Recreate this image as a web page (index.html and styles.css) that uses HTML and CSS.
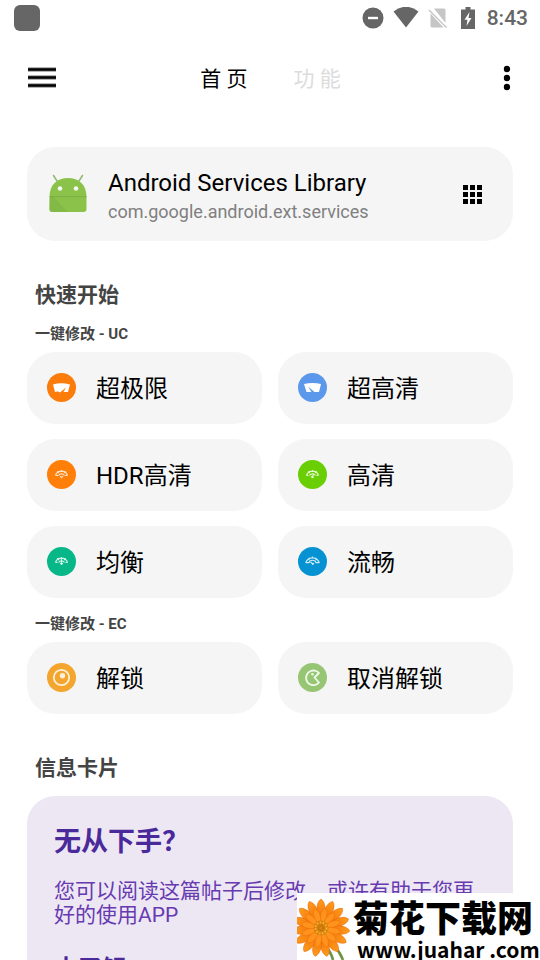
FILE: index.html
```html
<!DOCTYPE html>
<html lang="zh-CN">
<head>
<meta charset="utf-8">
<meta name="viewport" content="width=device-width, initial-scale=1">
<title>首页</title>
<link rel="stylesheet" href="styles.css">
</head>
<body>
<div class="status">
  <span class="status-app"></span>
  <div class="status-icons">
    <svg width="22" height="22" viewBox="0 0 22 22"><circle cx="11" cy="11" r="10.5" fill="#666"/><path d="M6 11h10" stroke="#fff" stroke-width="2.4"/></svg>
    <svg width="26" height="22" viewBox="0 0 26 22"><path d="M.5 4.500Q13-5 25.500 4.500L13 20.500z" fill="#666"/></svg>
    <svg class="sim" width="20" height="22" viewBox="0 0 20 22"><path d="M6 1.500h10q1.500 0 1.500 1.500v13zM2.500 6.500l13 14H4q-1.500 0-1.500-1.500z" fill="#c6c6c6"/><path d="M1 3l17.500 17.500" stroke="#c6c6c6" stroke-width="1.600"/><path d="M4 3.500L18 18" stroke="#fff" stroke-width="1.200"/></svg>
    <svg class="battery" width="14" height="22" viewBox="0 0 14 22"><path d="M4.500 0h5v2.500H14V22H0V2.500h4.500z" fill="#666"/><path d="M8.500 5L3.500 12.800h3L5.500 19l5-8h-3z" fill="#fff"/></svg>
    <span class="clock">8:43</span>
  </div>
</div>

<header class="appbar">
  <button class="icon-btn" aria-label="菜单"><svg width="28" height="22" viewBox="0 0 28 22"><path d="M0 2.500h28M0 10.500h28M0 18.500h28" stroke="#999" stroke-width="4.400"/><path d="M0 2.500h28M0 10.500h28M0 18.500h28" stroke="#000" stroke-width="2.600"/></svg></button>
  <nav class="tabs">
    <a class="tab tab-active" href="#home">首 页</a>
    <a class="tab" href="#features">功 能</a>
  </nav>
  <button class="icon-btn icon-end" aria-label="更多"><svg width="12" height="26" viewBox="0 0 12 26"><circle cx="6" cy="4" r="3.200"/><circle cx="6" cy="13" r="3.200"/><circle cx="6" cy="22" r="3.200"/></svg></button>
</header>

<main id="home">
  <section class="app-card">
    <svg width="38" height="40" viewBox="0 0 38 40">
      <path d="M8 7L4.500 1.500M30 7l3.500-5.500" stroke="#8fb871" stroke-width="1.500" stroke-linecap="round"/>
      <path d="M.5 22.500C.5 11 8 4 19 4s18.500 7 18.500 18.500z" fill="#8bc34a"/>
      <path d="M.5 22.500h37V35q0 3-3 3h-31q-3 0-3-3z" fill="#8bc34a"/>
      <path d="M1 22.500h3L19 38H3.500q-3 0-3-3z" fill="#83ba47"/>
      <path d="M.5 22.700h37" stroke="#78a93f" stroke-width="1"/>
      <circle cx="11" cy="14.500" r="2.300" fill="#f5f5f5"/><circle cx="27" cy="14.500" r="2.300" fill="#f5f5f5"/>
    </svg>
    <div class="app-text">
      <h1>Android Services Library</h1>
      <p>com.google.android.ext.services</p>
    </div>
    <button class="icon-btn" aria-label="选择应用"><svg width="19" height="19" viewBox="0 0 19 19"><path d="M0 0h5v5H0zM7 0h5v5H7zM14 0h5v5h-5zM0 7h5v5H0zM7 7h5v5H7zM14 7h5v5h-5zM0 14h5v5H0zM7 14h5v5H7zM14 14h5v5h-5z"/></svg></button>
  </section>

  <h2>快速开始</h2>
  <h3>一键修改 - UC</h3>
  <div class="grid">
    <button class="tile"><svg width="29" height="29" viewBox="0 0 29 29"><circle cx="14.500" cy="14.500" r="14.500" fill="#fb7c0a"/><path d="M6 11.500Q14.500 9 23 11.500L21 19h-4.500L19 14.500 13 19.500Q11 18 8 19z" fill="#fff"/></svg><span>超极限</span></button>
    <button class="tile"><svg width="29" height="29" viewBox="0 0 29 29"><circle cx="14.500" cy="14.500" r="14.500" fill="#5b98eb"/><path d="M6 11Q14.500 9 23 11L21 19h-4.500L10 13.500 13.500 19H8.500z" fill="#fff"/></svg><span>超高清</span></button>
    <button class="tile"><svg width="29" height="29" viewBox="0 0 29 29"><circle cx="14.500" cy="14.500" r="14.500" fill="#ff7f08"/><g fill="none" stroke="#ffe4cc" stroke-width="1.200"><path d="M8.500 15.500A6.200 5.800 0 0 1 20.500 15.500M11.500 15.500A3.500 3.500 0 0 1 17.500 15.500M8.500 15.500h2.500M18 15.500h2.500M14.500 10v2M10.200 11.500l1.800 1.500M18.800 11.500L17 13M13 16.200l1.500 1.500 1.500-1.500"/></g></svg><span>HDR高清</span></button>
    <button class="tile"><svg width="29" height="29" viewBox="0 0 29 29"><circle cx="14.500" cy="14.500" r="14.500" fill="#6ace04"/><g fill="none" stroke="#e4f8ce" stroke-width="1.200"><path d="M8.500 15.500A6.200 5.800 0 0 1 20.500 15.500M11.500 15.500A3.500 3.500 0 0 1 17.500 15.500M8.500 15.500h2M18.500 15.500h2M14.500 10v2M10.200 11.500l1.800 1.500M18.800 11.500L17 13M16 13.500l-2 4M13 16.500l1.500 1 1.500-.5"/></g></svg><span>高清</span></button>
    <button class="tile"><svg width="29" height="29" viewBox="0 0 29 29"><circle cx="14.500" cy="14.500" r="14.500" fill="#07b788"/><g fill="none" stroke="#cdf3e8" stroke-width="1.200"><path d="M8.500 15.500A6.200 5.800 0 0 1 20.500 15.500M11.500 15.500A3.500 3.500 0 0 1 17.500 15.500M8.500 15.500h2M18.500 15.500h2M14.500 10v7.500M10.200 11.500l1.800 1.500M18.800 11.500L17 13M13.200 16.200l1.300 1.300 1.300-1.300"/></g></svg><span>均衡</span></button>
    <button class="tile"><svg width="29" height="29" viewBox="0 0 29 29"><circle cx="14.500" cy="14.500" r="14.500" fill="#0592d2"/><g fill="none" stroke="#cdeaf7" stroke-width="1.200"><path d="M7.700 16A7 6.800 0 0 1 21.300 16M10.700 16A4 4 0 0 1 18.300 16M7.700 15.700h3M18.300 15.700h3M14.500 9.500v2M10.200 11.500l1.500 1.500M18.800 11.500L17.300 13M12.500 15l3 2.500M16 16l-2 1.500"/></g></svg><span>流畅</span></button>
  </div>

  <h3>一键修改 - EC</h3>
  <div class="grid">
    <button class="tile"><svg width="29" height="29" viewBox="0 0 29 29"><circle cx="14.500" cy="14.500" r="14.500" fill="#f4a52e"/><circle cx="14.500" cy="14.500" r="7.700" fill="none" stroke="#fff0d8" stroke-width="1.800"/><circle cx="15.500" cy="12.800" r="2.700" fill="#fff0d8"/></svg><span>解锁</span></button>
    <button class="tile"><svg width="29" height="29" viewBox="0 0 29 29"><circle cx="14.500" cy="14.500" r="14.500" fill="#96c674"/><path d="M21 10L16.500 14.500 21 19.500A7.300 7.300 0 1 1 18 8q2 .8 3 2z" fill="none" stroke="#f0fae8" stroke-width="1.800" stroke-linejoin="round"/><circle cx="14.500" cy="11.200" r="1.300" fill="#f0fae8"/></svg><span>取消解锁</span></button>
  </div>

  <h2>信息卡片</h2>
  <article class="info">
    <h4>无从下手？</h4>
    <p>您可以阅读这篇帖子后修改，或许有助于您更好的使用APP</p>
    <a href="#learn">去了解</a>
  </article>
</main>

<aside class="watermark">
  <svg width="56" height="67" viewBox="0 0 56 67">
    <defs>
      <linearGradient id="petal" x1="0" y1="0" x2="0" y2="1"><stop offset="0" stop-color="#ff9c1a"/><stop offset="1" stop-color="#f06a08"/></linearGradient>
      <path id="p" d="M0-5C-6-15-5-26 0-29C5-26 6-15 0-5z" fill="url(#petal)" stroke="#e5640a" stroke-width=".5"/>
      <path id="q" d="M0-3C-4-10-4-17 0-20C4-17 4-10 0-3z" fill="#ff931c" stroke="#ee750d" stroke-width=".5"/>
    </defs>
    <path d="M29 54q5 5 7 13M37 53q6 6 9 14" stroke="#6d9440" stroke-width="2.600" fill="none"/>
    <g transform="translate(24 35)">
      <use href="#p"/><use href="#p" transform="rotate(24)"/><use href="#p" transform="rotate(48)"/><use href="#p" transform="rotate(72)"/><use href="#p" transform="rotate(96)"/><use href="#p" transform="rotate(120)"/><use href="#p" transform="rotate(144)"/><use href="#p" transform="rotate(168)"/><use href="#p" transform="rotate(192)"/><use href="#p" transform="rotate(216)"/><use href="#p" transform="rotate(240)"/><use href="#p" transform="rotate(264)"/><use href="#p" transform="rotate(288)"/><use href="#p" transform="rotate(312)"/><use href="#p" transform="rotate(336)"/>
      <use href="#q" transform="rotate(12)"/><use href="#q" transform="rotate(42)"/><use href="#q" transform="rotate(72)"/><use href="#q" transform="rotate(102)"/><use href="#q" transform="rotate(132)"/><use href="#q" transform="rotate(162)"/><use href="#q" transform="rotate(192)"/><use href="#q" transform="rotate(222)"/><use href="#q" transform="rotate(252)"/><use href="#q" transform="rotate(282)"/><use href="#q" transform="rotate(312)"/><use href="#q" transform="rotate(342)"/>
      <circle r="7.500" fill="#d9820f"/><circle r="5.500" fill="none" stroke="#f5b52b" stroke-width="2" stroke-dasharray="1.500 1.500"/><circle r="2.500" fill="none" stroke="#b9680c" stroke-width="1.500" stroke-dasharray="1 1"/>
    </g>
  </svg>
  <div class="mark-text">
    <strong>菊花下载网</strong>
    <span>www.juahar .com</span>
  </div>
</aside>
</body>
</html>
```
FILE: styles.css
```css
* { box-sizing: border-box; }

body {
  position: relative;
  height: 100vh;
  margin: 0;
  overflow: hidden;
  background: #fff;
  color: #000;
  font-family: Roboto, "Noto Sans CJK SC", sans-serif;
}

svg { display: block; flex: none; }
h1, h2, h3, h4, p { margin: 0; }
button { border: 0; padding: 0; background: none; color: inherit; font: inherit; }
a { color: inherit; text-decoration: none; }

.status {
  display: flex;
  align-items: center;
  justify-content: space-between;
  height: 36px;
  padding: 0 12px 0 14px;
}
.status-app { width: 26px; height: 26px; border-radius: 6px; background: #666; }
.status-icons { display: flex; align-items: center; }
.status-icons svg { margin-right: 9px; }
.status-icons .sim { margin-right: 13px; }
.status-icons .battery { margin-right: 12px; }
.clock { color: #666; font-size: 21px; font-weight: 500; line-height: 24px; }

.appbar {
  display: grid;
  grid-template-columns: 1fr auto 1fr;
  align-items: center;
  height: 84px;
  padding: 0 27px 0 28px;
}
.icon-end { justify-self: end; }
.tabs { display: flex; gap: 46px; padding-top: 2px; }
.tab { color: #dcdcdc; font-size: 21px; line-height: 30px; }
.tab-active { color: #000; }

main { padding: 27px 27px 0; }

.app-card {
  display: flex;
  align-items: center;
  height: 94px;
  padding: 0 31px 0 22px;
  border-radius: 28px;
  background: #f5f5f5;
}
.app-text { flex: 1; padding: 4px 0 0 21px; }
.app-text h1 { font-size: 24px; font-weight: 400; line-height: 32px; }
.app-text p { color: #808080; font-size: 18px; line-height: 26px; }

h2 {
  padding: 42px 8px 0;
  color: #444;
  font-size: 21px;
  font-weight: 700;
  line-height: 25px;
}
h3 {
  padding: 15px 8px 7px;
  color: #444;
  font-size: 15px;
  font-weight: 700;
  line-height: 22px;
}

.grid { display: grid; grid-template-columns: 1fr 1fr; gap: 15px 16px; }
.tile {
  display: flex;
  align-items: center;
  gap: 20px;
  height: 72px;
  padding: 0 20px 2px;
  border-radius: 28px;
  background: #f5f5f5;
  font-size: 24px;
  text-align: left;
}
.tile span { padding-top: 4px; line-height: 32px; }

.info {
  margin-top: 15px;
  padding: 27px 27px 40px;
  border-radius: 28px;
  background: #ede7f4;
  color: #673ab0;
}
.info h4 { color: #4a2a9a; font-size: 27px; font-weight: 700; line-height: 38px; }
.info p { padding: 18px 0 24px; font-size: 21px; line-height: 24px; }
.info a { display: block; color: #4a2a9a; font-size: 24px; font-weight: 700; line-height: 36px; }

.watermark {
  position: absolute;
  right: 0;
  bottom: 0;
  display: flex;
  width: 45%;
  height: 67px;
  background: #fff;
}
.mark-text {
  display: flex;
  flex-direction: column;
  font-family: "Noto Sans CJK SC", sans-serif;
  white-space: nowrap;
}
.mark-text strong {
  font-size: 36px;
  font-weight: 900;
  line-height: 46px;
}
.mark-text span {
  margin-top: -4px;
  padding-left: 4px;
  font-size: 21px;
  font-weight: 700;
  line-height: 28px;
}
```
